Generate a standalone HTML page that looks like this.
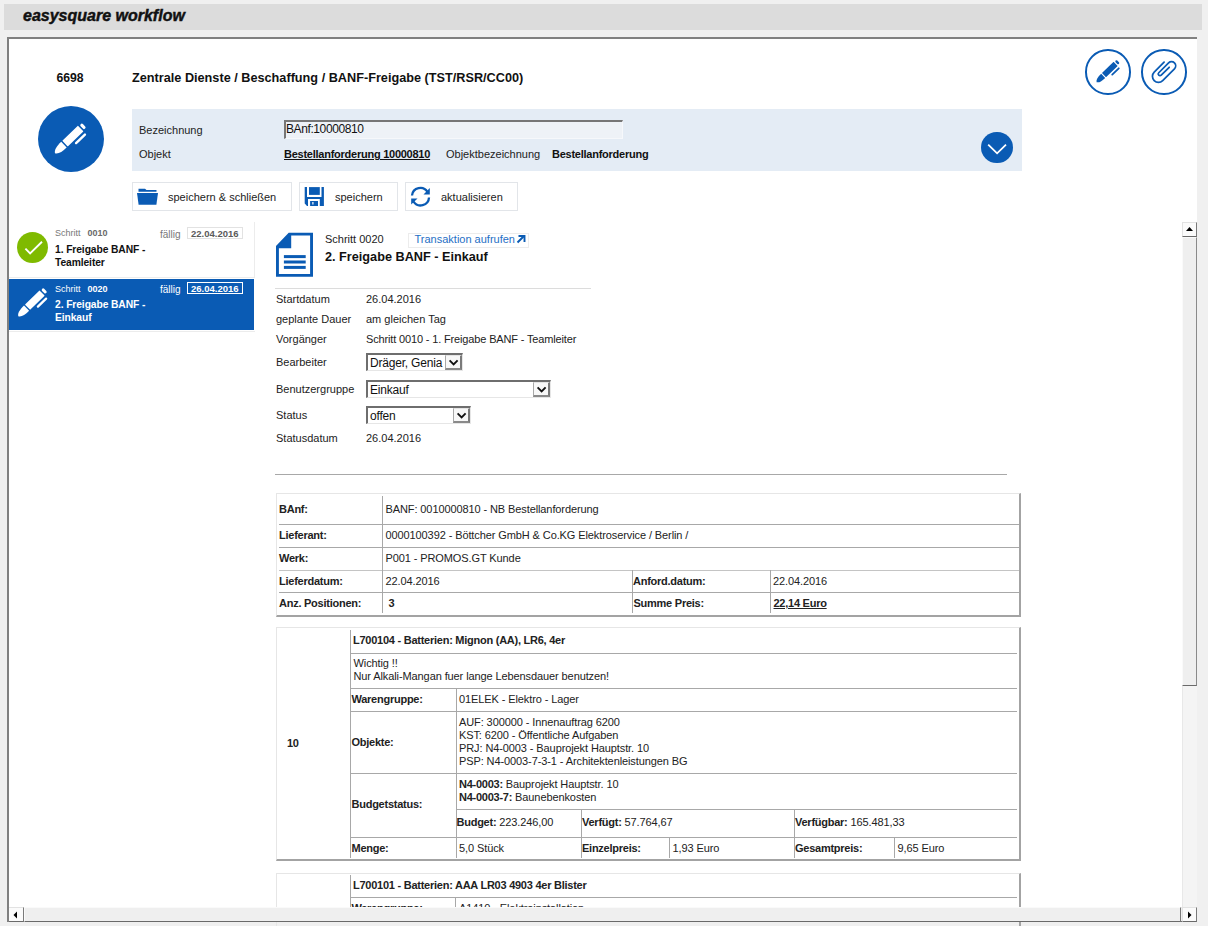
<!DOCTYPE html>
<html><head><meta charset="utf-8">
<style>
*{box-sizing:border-box}
html,body{margin:0;padding:0}
body{width:1208px;height:926px;background:#f0f0f0;position:relative;overflow:hidden;font-family:"Liberation Sans",sans-serif;font-size:11px;color:#222}
.a{position:absolute;white-space:nowrap}
svg{position:absolute;overflow:visible}
#hdr{left:4px;top:4px;width:1198px;height:26px;background:#dcdcdc}
#hdr span{position:absolute;left:19px;top:3px;font-size:16px;font-weight:bold;font-style:italic;color:#111;-webkit-text-stroke:0.45px #111}
#panel{left:7px;top:37px;width:1190px;height:885px;background:#fff;border-top:2px solid #808080;border-left:2px solid #808080}
.b{font-weight:bold;letter-spacing:-0.25px}
.circ{position:absolute;border-radius:50%}
.btn{position:absolute;top:182px;height:29px;background:#fff;border:1px solid #e2e5e9}
.btn span{position:absolute;top:8px;font-size:11px;color:#222}
.l{position:absolute;white-space:nowrap;font-size:11px;color:#222;line-height:13px}
.hl{position:absolute;height:1px;background:#a8a8a8}
.vl{position:absolute;width:1px;background:#a8a8a8}
.lw{position:absolute;height:2px}
.t{letter-spacing:-0.1px}
.bb{font-weight:bold;letter-spacing:-0.25px}
.sel{position:absolute;background:#fff;border-top:2px solid #6e6e6e;border-left:2px solid #6e6e6e;border-right:1px solid #e6e6e6;border-bottom:1px solid #e6e6e6}
.sel span{position:absolute;left:2px;top:1px;font-size:12px;line-height:15px;color:#111;letter-spacing:-0.2px}
.sel i{position:absolute;right:0;top:0;width:17px;bottom:0;border-left:1px solid #a8a8a8;border-top:1px solid #e4e4e4;border-right:2px solid #7a7a7a;border-bottom:2px solid #8a8a8a;background:#f8f8f8}
.sel i svg{left:3px;top:3px}
</style></head><body>
<div id="hdr" class="a"><span>easysquare workflow</span></div>
<div id="panel" class="a"></div>

<div class="a" style="left:56.5px;top:71px;font-size:12.2px;font-weight:bold;color:#111">6698</div>
<div class="a" style="left:132px;top:71px;font-size:12.7px;font-weight:bold;color:#111">Zentrale Dienste / Beschaffung / BANF-Freigabe (TST/RSR/CC00)</div>

<!-- top-right circle buttons -->
<div class="circ" style="left:1085px;top:49px;width:45.5px;height:45.5px;border:2px solid #0a5bb4"></div>
<div class="circ" style="left:1141px;top:49px;width:45.5px;height:45.5px;border:2px solid #0a5bb4"></div>
<svg width="1" height="1" style="left:0;top:0">
 <defs>
  <g id="pen">
   <path d="M0,0 C1.2,-2.2 4.5,-2.9 9.2,-2.9 L9.2,2.9 C4.5,2.9 1.2,2.2 0,0 Z"/>
   <rect x="10.3" y="-2.9" width="16.1" height="5.8" rx="0.3"/>
   <rect x="27.6" y="-2.3" width="2.3" height="4.6" rx="1.1"/>
   <rect x="15.6" y="4.5" width="10.9" height="1.8" rx="0.9"/>
  </g>
 </defs>
</svg>
<svg width="1" height="1" style="left:0;top:0"><use href="#pen" fill="#0a5bb4" transform="translate(1096.6,82.2) rotate(-44)"/></svg>
<svg width="1" height="1" style="left:0;top:0"><path fill="none" stroke="#0a5bb4" stroke-width="1.75" stroke-linecap="round" transform="translate(1145,52) rotate(-45)" d="M6.3,20.7 L-7.7,20.7 A6,6 0 0 0 -7.7,32.7 L8.95,32.7 A4.15,4.15 0 0 0 8.95,24.4 L-4.95,24.4 A1.75,1.75 0 0 0 -4.95,27.9 L6.3,27.9"/></svg>

<!-- big blue circle -->
<div class="circ" style="left:38px;top:105.5px;width:66px;height:66px;background:#0a5bb4"></div>
<svg width="1" height="1" style="left:0;top:0"><use href="#pen" fill="#fff" transform="translate(55,153.3) rotate(-44) scale(1.35)"/></svg>

<!-- light blue panel -->
<div class="a" style="left:132px;top:109px;width:890px;height:62px;background:#e4ecf5"></div>
<div class="l" style="left:139px;top:124px">Bezeichnung</div>
<div class="a" style="left:284px;top:120px;width:339px;height:19px;background:#eef2f7;border-top:2px solid #767676;border-left:2px solid #767676;border-right:1px solid #f6f8fb;border-bottom:1px solid #f6f8fb"></div>
<div class="l" style="left:286px;top:123px;font-size:12px;letter-spacing:-0.4px;color:#111">BAnf:10000810</div>
<div class="l" style="left:139px;top:148px">Objekt</div>
<div class="l b" style="left:284px;top:148px;text-decoration:underline;color:#111">Bestellanforderung 10000810</div>
<div class="l" style="left:446px;top:148px">Objektbezeichnung</div>
<div class="l b" style="left:552px;top:148px;color:#111">Bestellanforderung</div>
<div class="circ" style="left:981.3px;top:131.6px;width:31.6px;height:31.4px;background:#0a5bb4"></div>
<svg width="1" height="1" style="left:0;top:0"><path d="M988.2,144.6 L997.1,153.3 L1006,144.6" fill="none" stroke="#fff" stroke-width="1.8"/></svg>

<!-- buttons -->
<div class="btn" style="left:132px;width:160px"><span style="left:35px">speichern &amp; schließen</span></div>
<div class="btn" style="left:299px;width:99px"><span style="left:35px">speichern</span></div>
<div class="btn" style="left:405px;width:113px"><span style="left:35px">aktualisieren</span></div>
<svg width="1" height="1" style="left:0;top:0" fill="#0a5bb4">
 <path d="M138.5,188.8 L145,188.8 L146.5,190 L156.5,190 L156.5,191.8 L138.5,191.8 Z"/>
 <path d="M137,193 L158,193 L156.4,204.7 L138.6,204.7 Z"/>
</svg>
<svg width="1" height="1" style="left:0;top:0" fill="#0a5bb4">
 <path fill-rule="evenodd" d="M304.7,187.1 L323.9,187.1 L323.9,205.9 L307,205.9 L304.7,203.5 Z M307,187.1 L321.5,187.1 L321.5,197 L307,197 Z M308,199 L319.8,199 L319.8,205.9 L308,205.9 Z"/>
 <rect x="309" y="187.1" width="10.8" height="7.8"/>
 <path fill-rule="evenodd" d="M310.1,201 L318,201 L318,205.9 L310.1,205.9 Z M312.3,202 L313.5,202 L313.5,204.5 L312.3,204.5 Z"/>
</svg>
<svg width="1" height="1" style="left:0;top:0">
 <g fill="none" stroke="#0a5bb4" stroke-width="2.3">
  <path d="M412,195.5 A8.4,8.4 0 0 1 427.5,192"/>
  <path d="M429,197.5 A8.4,8.4 0 0 1 413.5,201.5"/>
 </g>
 <g fill="#0a5bb4">
  <path d="M429.8,188 L429.8,194.5 L423.5,194.5 Z"/>
  <path d="M411.2,204.5 L411.2,198.5 L417.5,198.5 Z"/>
 </g>
</svg>

<!-- step list -->
<div class="a" style="left:9px;top:222px;width:246px;height:56px;background:#fff;border-right:1px solid #ececec;border-bottom:1px solid #ececec"></div>
<div class="circ" style="left:17px;top:231.6px;width:31.2px;height:31.2px;background:#7fba00"></div>
<svg width="1" height="1" style="left:0;top:0"><path d="M25.4,248.7 L30.1,253.4 L42,241.8" fill="none" stroke="#fff" stroke-width="1.9"/></svg>
<div class="l" style="left:55px;top:227px;font-size:9px;color:#777">Schritt</div>
<div class="l" style="left:87.5px;top:227px;font-size:9px;font-weight:bold;color:#6a6a6a">0010</div>
<div class="l" style="left:160px;top:228px;font-size:10px;color:#777">fällig</div>
<div class="a" style="left:187px;top:226.6px;width:56px;height:12px;border:1px solid #e2e2e2"></div>
<div class="l" style="left:191px;top:226.5px;font-size:9.5px;font-weight:bold;color:#5a5a5a">22.04.2016</div>
<div class="l" style="left:55px;top:243.2px;font-size:10.3px;font-weight:bold;letter-spacing:-0.1px;color:#111;line-height:13px">1. Freigabe BANF -<br>Teamleiter</div>

<div class="a" style="left:9px;top:279px;width:245px;height:51px;background:#0a5bb4"></div>
<div class="a" style="left:9px;top:331px;width:246px;height:1px;background:#ececec"></div>
<svg width="1" height="1" style="left:0;top:0"><use href="#pen" fill="#fff" transform="translate(18.3,316.3) rotate(-44.4) scale(1.26)"/></svg>
<div class="l" style="left:55px;top:282.7px;font-size:9px;color:#fff">Schritt</div>
<div class="l" style="left:87.5px;top:282.7px;font-size:9px;font-weight:bold;color:#fff">0020</div>
<div class="l" style="left:160px;top:283px;font-size:10px;color:#fff">fällig</div>
<div class="a" style="left:187px;top:282px;width:56px;height:12px;border:1px solid #fff"></div>
<div class="l" style="left:191px;top:281.5px;font-size:9.5px;font-weight:bold;color:#fff">26.04.2016</div>
<div class="l" style="left:55px;top:298.2px;font-size:10.3px;font-weight:bold;letter-spacing:-0.1px;color:#fff;line-height:13px">2. Freigabe BANF -<br>Einkauf</div>

<!-- detail header -->
<svg width="1" height="1" style="left:0;top:0" fill="#0a5bb4">
 <path fill-rule="evenodd" d="M276,246 L288.7,232.7 L313,232.7 L313,276.8 L276,276.8 Z M278.9,248.3 L291.2,248.3 L291.2,235.6 L310.1,235.6 L310.1,273.9 L278.9,273.9 Z"/>
 <rect x="283.9" y="255.1" width="21.8" height="3"/>
 <rect x="283.9" y="260.5" width="21.8" height="3"/>
 <rect x="283.9" y="265.9" width="21.8" height="3"/>
</svg>
<div class="l" style="left:325px;top:233px">Schritt 0020</div>
<div class="a" style="left:408px;top:232.5px;width:121px;height:15.5px;border:1px solid #ececec"></div>
<div class="l" style="left:414.5px;top:233px;color:#1f6fc5">Transaktion aufrufen</div>
<svg width="1" height="1" style="left:0;top:0"><g stroke="#0a5bb4" stroke-width="1.9" fill="none"><path d="M517.5,242.5 L524,236"/><path d="M518.5,236 L524.5,236 L524.5,242"/></g></svg>
<div class="l" style="left:325px;top:250.2px;font-size:12.7px;font-weight:bold;color:#111;line-height:15px">2. Freigabe BANF - Einkauf</div>
<div class="a" style="left:275px;top:288px;width:316px;height:1px;background:#dcdcdc"></div>

<div class="l" style="left:276px;top:292.5px">Startdatum</div><div class="l" style="left:366px;top:292.5px">26.04.2016</div>
<div class="l" style="left:276px;top:312.5px">geplante Dauer</div><div class="l" style="left:366px;top:312.5px">am gleichen Tag</div>
<div class="l" style="left:276px;top:332.5px">Vorgänger</div><div class="l" style="left:366px;top:332.5px;letter-spacing:-0.15px">Schritt 0010 - 1. Freigabe BANF - Teamleiter</div>
<div class="l" style="left:276px;top:356px">Bearbeiter</div>
<div class="l" style="left:276px;top:382.5px">Benutzergruppe</div>
<div class="l" style="left:276px;top:408.5px">Status</div>
<div class="l" style="left:276px;top:431.5px">Statusdatum</div><div class="l" style="left:366px;top:431.5px">26.04.2016</div>

<div class="sel" style="left:366px;top:353px;width:96.7px;height:18px"><span>Dräger, Genia</span><i><svg width="1" height="1"><path d="M0.6,1.3 L4.6,5.3 L8.6,1.3" fill="none" stroke="#111" stroke-width="1.9"/></svg></i></div>
<div class="sel" style="left:366px;top:379.5px;width:184.5px;height:18px"><span>Einkauf</span><i><svg width="1" height="1"><path d="M0.6,1.3 L4.6,5.3 L8.6,1.3" fill="none" stroke="#111" stroke-width="1.9"/></svg></i></div>
<div class="sel" style="left:366px;top:406px;width:104.5px;height:18px"><span>offen</span><i><svg width="1" height="1"><path d="M0.6,1.3 L4.6,5.3 L8.6,1.3" fill="none" stroke="#111" stroke-width="1.9"/></svg></i></div>

<div class="a" style="left:275px;top:474px;width:732px;height:1px;background:#a8a8a8"></div>

<!-- TABLE 1 -->
<div class="a" style="left:276px;top:493px;width:745px;height:124px;border-top:1px solid #e6e6e6;border-left:1px solid #e6e6e6;border-right:2px solid #a3a3a3;border-bottom:2px solid #a3a3a3"></div>
<div class="hl" style="left:279px;top:524px;width:740px"></div>
<div class="hl" style="left:279px;top:547px;width:740px"></div>
<div class="hl" style="left:279px;top:569.5px;width:740px;background:#c4c4c4"></div>
<div class="hl" style="left:279px;top:592px;width:740px"></div>
<div class="vl" style="left:382px;top:496px;height:117px"></div>
<div class="vl" style="left:632px;top:570px;height:43px"></div>
<div class="vl" style="left:770px;top:570px;height:43px"></div>
<div class="l b" style="left:279px;top:502.5px">BAnf:</div><div class="l t" style="left:385.5px;top:502.5px">BANF: 0010000810 - NB Bestellanforderung</div>
<div class="l b" style="left:279px;top:529px">Lieferant:</div><div class="l t" style="left:385.5px;top:529px">0000100392 - Böttcher GmbH &amp; Co.KG Elektroservice / Berlin /</div>
<div class="l b" style="left:279px;top:551.5px">Werk:</div><div class="l t" style="left:385.5px;top:551.5px">P001 - PROMOS.GT Kunde</div>
<div class="l b" style="left:279px;top:574.5px">Lieferdatum:</div><div class="l t" style="left:385.5px;top:574.5px">22.04.2016</div>
<div class="l b" style="left:633px;top:574.5px">Anford.datum:</div><div class="l t" style="left:773px;top:574.5px">22.04.2016</div>
<div class="l b" style="left:279px;top:597px">Anz. Positionen:</div><div class="l b" style="left:388.5px;top:597px">3</div>
<div class="l b" style="left:633.5px;top:597px">Summe Preis:</div><div class="l b" style="left:773.5px;top:597px;text-decoration:underline">22,14 Euro</div>

<!-- TABLE 2 -->
<div class="a" style="left:276px;top:627px;width:745px;height:234px;border-top:1px solid #e6e6e6;border-left:1px solid #e6e6e6;border-right:2px solid #a3a3a3;border-bottom:2px solid #a3a3a3"></div>
<div class="vl" style="left:350px;top:630px;height:228px"></div>
<div class="hl" style="left:350px;top:652.5px;width:667px"></div>
<div class="hl" style="left:350px;top:688px;width:667px"></div>
<div class="hl" style="left:350px;top:711px;width:667px"></div>
<div class="hl" style="left:350px;top:773px;width:667px"></div>
<div class="hl" style="left:456px;top:809px;width:561px"></div>
<div class="hl" style="left:350px;top:837px;width:667px"></div>
<div class="vl" style="left:455.5px;top:688px;height:170px"></div>
<div class="vl" style="left:580.5px;top:809px;height:49px"></div>
<div class="vl" style="left:793.5px;top:809px;height:49px"></div>
<div class="vl" style="left:669px;top:837px;height:21px"></div>
<div class="vl" style="left:894px;top:837px;height:21px"></div>
<div class="lw" style="left:276px;top:685.5px;width:741px"></div>
<div class="lw" style="left:453.5px;top:688px;height:170px;width:2px"></div>

<div class="l b" style="left:287px;top:737px">10</div>
<div class="l b" style="left:353px;top:634px">L700104 - Batterien: Mignon (AA), LR6, 4er</div>
<div class="l t" style="left:353.5px;top:656.5px;line-height:13px">Wichtig !!<br>Nur Alkali-Mangan fuer lange Lebensdauer benutzen!</div>
<div class="l b" style="left:351.5px;top:693px">Warengruppe:</div><div class="l t" style="left:459px;top:693px">01ELEK - Elektro - Lager</div>
<div class="l b" style="left:351.5px;top:735.5px">Objekte:</div>
<div class="l t" style="left:459px;top:715.5px;line-height:13.3px">AUF: 300000 - Innenauftrag 6200<br>KST: 6200 - Öffentliche Aufgaben<br>PRJ: N4-0003 - Bauprojekt Hauptstr. 10<br>PSP: N4-0003-7-3-1 - Architektenleistungen BG</div>
<div class="l b" style="left:351.5px;top:798px">Budgetstatus:</div>
<div class="l t" style="left:459px;top:778px;line-height:13px"><b class="bb">N4-0003:</b> Bauprojekt Hauptstr. 10<br><b class="bb">N4-0003-7:</b> Baunebenkosten</div>
<div class="l t" style="left:456.5px;top:816px"><b class="bb">Budget:</b> 223.246,00</div>
<div class="l t" style="left:582px;top:816px"><b class="bb">Verfügt:</b> 57.764,67</div>
<div class="l t" style="left:795px;top:816px"><b class="bb">Verfügbar:</b> 165.481,33</div>
<div class="l b" style="left:351.5px;top:842px">Menge:</div><div class="l t" style="left:459px;top:842px">5,0 Stück</div>
<div class="l b" style="left:582px;top:842px">Einzelpreis:</div><div class="l t" style="left:672.5px;top:842px">1,93 Euro</div>
<div class="l b" style="left:795px;top:842px">Gesamtpreis:</div><div class="l t" style="left:897.5px;top:842px">9,65 Euro</div>

<!-- TABLE 3 (clipped) -->
<div class="a" style="left:276px;top:872.5px;width:745px;height:60px;border-top:1px solid #e6e6e6;border-left:1px solid #e6e6e6;border-right:2px solid #a3a3a3"></div>
<div class="vl" style="left:350px;top:875px;height:32px"></div>
<div class="hl" style="left:350px;top:897px;width:667px"></div>
<div class="vl" style="left:455px;top:897px;height:10px"></div>
<div class="l b" style="left:353px;top:878.5px">L700101 - Batterien: AAA LR03 4903 4er Blister</div>
<div class="l b" style="left:351.5px;top:901.5px">Warengruppe:</div><div class="l t" style="left:459px;top:901.5px">A1410 - Elektroinstallation</div>


<!-- scrollbars -->
<div class="a" style="left:1182px;top:222px;width:15px;height:685px;background:#f4f4f4;border-left:1px solid #e8e8e8"></div>
<div class="a" style="left:1182px;top:222px;width:15px;height:15px;background:#fbfbfb;border-top:1px solid #e2e2e2;border-left:1px solid #e2e2e2;border-right:1px solid #7a7a7a;border-bottom:1px solid #6a6a6a"></div>
<svg width="1" height="1" style="left:0;top:0"><path d="M1186,231 L1189.5,227 L1193,231 Z" fill="#000"/></svg>
<div class="a" style="left:1182px;top:237px;width:15px;height:449px;background:#efefef;border-top:1px solid #fafafa;border-left:1px solid #fafafa;border-right:1px solid #8a8a8a;border-bottom:1px solid #6a6a6a"></div>

<div class="a" style="left:9px;top:907px;width:1188px;height:15px;background:#efefef;border-top:1px solid #e6e6e6;border-bottom:1px solid #6e6e6e"></div>
<div class="a" style="left:9px;top:907px;width:15px;height:15px;background:#fbfbfb;border-top:1px solid #e2e2e2;border-right:1px solid #7a7a7a;border-bottom:1px solid #6a6a6a"></div>
<svg width="1" height="1" style="left:0;top:0"><path d="M17,911.5 L13.5,915 L17,918.5 Z" fill="#000"/></svg>
<div class="a" style="left:24px;top:907px;width:1157px;height:15px;border-top:1px solid #fafafa;border-left:1px solid #fafafa;border-right:1px solid #7a7a7a;border-bottom:1px solid #6a6a6a"></div>
<div class="a" style="left:1182px;top:907px;width:15px;height:15px;background:#fbfbfb;border-top:1px solid #e2e2e2;border-left:1px solid #e2e2e2;border-right:1px solid #7a7a7a;border-bottom:1px solid #6a6a6a"></div>
<svg width="1" height="1" style="left:0;top:0"><path d="M1188,911.5 L1191.5,915 L1188,918.5 Z" fill="#000"/></svg>
</body></html>
